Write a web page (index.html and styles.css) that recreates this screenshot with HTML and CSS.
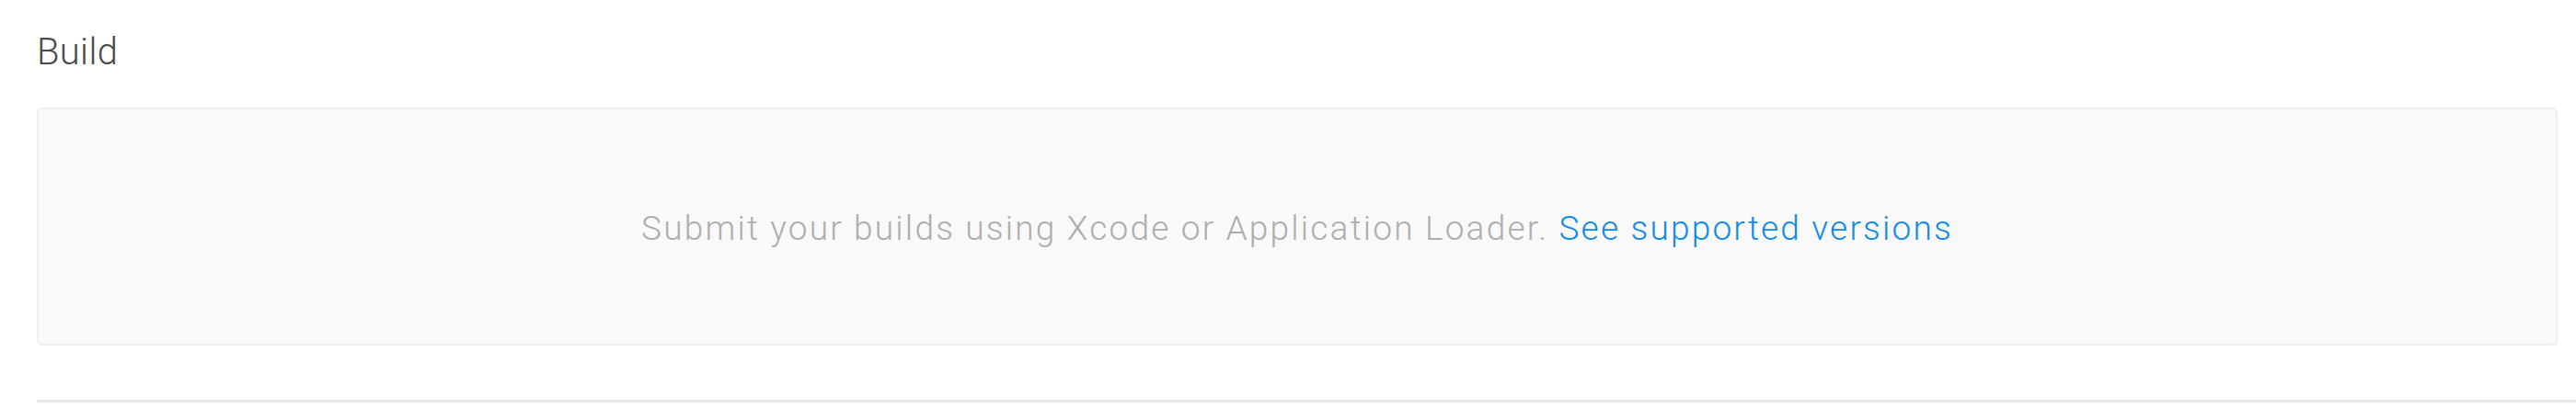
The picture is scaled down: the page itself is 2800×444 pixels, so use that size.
FILE: index.html
```html
<!DOCTYPE html>
<html>
<head>
<meta charset="utf-8">
<link rel="stylesheet" href="styles.css">
</head>
<body>
<section class="section">
  <h2 class="section-title">Build</h2>
  <div class="empty-box">
    <p class="empty-text">Submit your builds using Xcode or Application Loader. <a class="empty-link" href="#">See supported versions</a></p>
  </div>
  <div class="divider"></div>
</section>
</body>
</html>
```
FILE: styles.css
```css
html, body {
  margin: 0;
  padding: 0;
  background: #ffffff;
}
body {
  font-family: Roboto, "Liberation Sans", sans-serif;
}
.section {
  padding: 0 0 0 40px;
}
.section-title {
  margin: 0;
  padding-top: 35px;
  height: 85px;
  box-sizing: border-box;
  font-size: 40px;
  line-height: 44px;
  font-weight: 300;
  color: #4a4a4a;
  letter-spacing: 0.3px;
}
.empty-box {
  margin-top: 32px;
  margin-right: 20px;
  height: 259px;
  box-sizing: border-box;
  padding-top: 3px;
  border: 2px solid #efefef;
  border-radius: 5px;
  background: #f9f9f9;
  display: flex;
  align-items: center;
  justify-content: center;
}
.empty-text {
  margin: 0;
  font-size: 37px;
  font-weight: 300;
  letter-spacing: 2.2px;
  color: #adadad;
}
.empty-link {
  color: #0f89ec;
  text-decoration: none;
}
.divider {
  margin-top: 59px;
  height: 3px;
  background: #e8e8e8;
}
```
